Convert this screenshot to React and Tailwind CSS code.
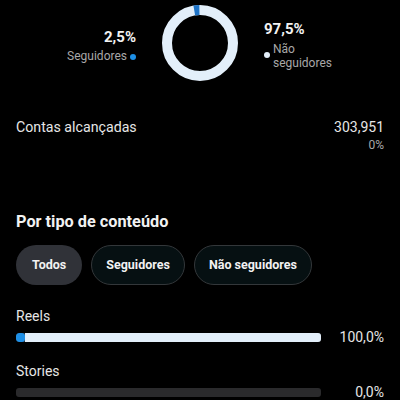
import React from "react";

function Donut() {
  const r = 33;
  const c = 2 * Math.PI * r;
  const blue = c * 0.025;
  return (
    <svg width="78" height="78" viewBox="0 0 78 78">
      <circle cx="39" cy="39" r={r} fill="none" stroke="#e3effa" strokeWidth="10" />
      <circle
        cx="39"
        cy="39"
        r={r}
        fill="none"
        stroke="#1e74c8"
        strokeWidth="10"
        strokeDasharray={`${blue} ${c}`}
        transform="rotate(-100 39 39)"
      />
    </svg>
  );
}

function Bar({ label, pct, filled }) {
  return (
    <div className="flex flex-col">
      <div className="text-[14px] text-[#e6e6e6] leading-[18px]">{label}</div>
      <div className="flex items-center mt-[8px] h-[9px]">
        <div className="w-[305px] h-[9px] rounded-[3px] bg-[#2a2a2c] flex overflow-hidden">
          {filled && (
            <>
              <div className="w-[9px] h-full bg-[#1d8fe6] rounded-[3px]"></div>
              <div className="flex-1 h-full bg-[#e3effa]"></div>
            </>
          )}
        </div>
        <div className="flex-1 text-right text-[14px] leading-[9px] text-[#e6e6e6]">{pct}</div>
      </div>
    </div>
  );
}

export default function App() {
  return (
    <div
      className="w-[400px] h-[400px] bg-black overflow-hidden text-white"
      style={{ fontFamily: "Roboto, 'Noto Sans', sans-serif" }}
    >
      <div className="flex justify-center items-start gap-[25px] h-[86px]">
        <div className="w-[72px] flex flex-col items-end mt-[28px]">
          <div className="text-[15px] font-bold leading-[18px] text-[#f2f2f2]">2,5%</div>
          <div className="flex items-center gap-[3px] mt-[3px]">
            <span className="text-[12px] text-[#a8a8a8] leading-[14px]">Seguidores</span>
            <span className="w-[6px] h-[6px] rounded-full bg-[#1d8fe6] translate-y-[1px]"></span>
          </div>
        </div>
        <div className="mt-[4px]">
          <Donut />
        </div>
        <div className="w-[72px] flex flex-col items-start mt-[20px]">
          <div className="text-[15px] font-bold leading-[18px] text-[#f2f2f2]">97,5%</div>
          <div className="flex items-start gap-[3px] mt-[4px]">
            <span className="w-[6px] h-[6px] rounded-full bg-[#e3effa] mt-[10px]"></span>
            <span className="text-[12px] text-[#a8a8a8] leading-[14px]">
              Não
              <br />
              seguidores
            </span>
          </div>
        </div>
      </div>

      <div className="flex justify-between px-[16px] mt-[32px]">
        <div className="text-[14.2px] text-[#e6e6e6] leading-[18px]">Contas alcançadas</div>
        <div className="flex flex-col items-end">
          <div className="text-[14px] text-[#e6e6e6] leading-[18px]">303,951</div>
          <div className="text-[12px] text-[#a8a8a8] leading-[14px] mt-[2px]">0%</div>
        </div>
      </div>

      <div className="px-[16px] mt-[60px] text-[16.3px] font-bold text-[#f2f2f2] leading-[20px]">
        Por tipo de conteúdo
      </div>

      <div className="flex px-[16px] gap-[9px] mt-[13px]">
        <div className="h-[40px] px-[16px] rounded-full bg-[#303238] flex items-center text-[12.5px] font-bold text-[#f2f2f2]">
          Todos
        </div>
        <div className="h-[40px] px-[14px] rounded-full border border-[#33373a] bg-[#061012] flex items-center text-[12.5px] font-bold text-[#f2f2f2]">
          Seguidores
        </div>
        <div className="h-[40px] px-[14px] rounded-full border border-[#33373a] bg-[#061012] flex items-center text-[12.5px] font-bold text-[#f2f2f2]">
          Não seguidores
        </div>
      </div>

      <div className="px-[16px] mt-[22px] flex flex-col gap-[20px]">
        <Bar label="Reels" pct="100,0%" filled />
        <Bar label="Stories" pct="0,0%" />
      </div>
    </div>
  );
}
